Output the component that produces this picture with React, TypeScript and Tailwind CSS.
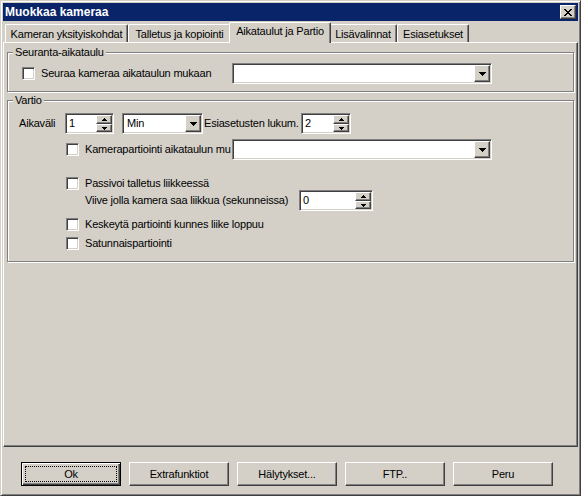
import React from 'react';

const tabs = [
  { label: 'Kameran yksityiskohdat', width: 'w-[123px]', active: false },
  { label: 'Talletus ja kopiointi', width: 'w-[103px]', active: false },
  { label: 'Aikataulut ja Partio', width: 'w-[102px]', active: true },
  { label: 'Lisävalinnat', width: 'w-[68px]', active: false },
  { label: 'Esiasetukset', width: 'w-[72px]', active: false },
];

const raised =
  'bg-[#d4d0c8] border border-t-white border-l-white border-r-[#404040] border-b-[#404040] shadow-[inset_-1px_-1px_0_#808080]';
const sunken =
  'bg-white border border-t-[#808080] border-l-[#808080] border-r-white border-b-white shadow-[inset_1px_1px_0_#404040,inset_-1px_-1px_0_#d4d0c8]';

function DownArrow() {
  return (
    <svg width="7" height="4" shapeRendering="crispEdges">
      <rect x="0" y="0" width="7" height="1" fill="#000" />
      <rect x="1" y="1" width="5" height="1" fill="#000" />
      <rect x="2" y="2" width="3" height="1" fill="#000" />
      <rect x="3" y="3" width="1" height="1" fill="#000" />
    </svg>
  );
}

function SmallArrow({ up }: { up?: boolean }) {
  return (
    <svg width="5" height="3" shapeRendering="crispEdges" className={up ? '' : 'rotate-180'}>
      <rect x="2" y="0" width="1" height="1" fill="#000" />
      <rect x="1" y="1" width="3" height="1" fill="#000" />
      <rect x="0" y="2" width="5" height="1" fill="#000" />
    </svg>
  );
}

function CloseGlyph() {
  const rows = [
    [0, 2, 6, 2],
    [1, 2, 5, 2],
    [2, 4],
    [3, 2],
    [2, 4],
    [1, 2, 5, 2],
    [0, 2, 6, 2],
  ];
  return (
    <svg width="8" height="7" shapeRendering="crispEdges">
      {rows.map((r, y) => (
        <g key={y}>
          <rect x={r[0]} y={y} width={r[1]} height="1" fill="#000" />
          {r.length > 2 && <rect x={r[2]} y={y} width={r[3]} height="1" fill="#000" />}
        </g>
      ))}
    </svg>
  );
}

function Checkbox() {
  return <span className={`w-[13px] h-[13px] shrink-0 ${sunken}`} />;
}

function Combo({ value, width }: { value?: string; width: string }) {
  return (
    <div className={`${width} h-[21px] shrink-0 p-px flex ${sunken}`}>
      <span className="flex-1 pl-[3px] flex items-center">{value}</span>
      <span className={`w-[16px] h-full flex items-center justify-center ${raised}`}>
        <DownArrow />
      </span>
    </div>
  );
}

function Spin({ value, width }: { value: string; width: string }) {
  return (
    <div className={`${width} h-[21px] shrink-0 p-px flex ${sunken}`}>
      <span className="flex-1 pl-[2px] flex items-center">{value}</span>
      <div className="w-[16px] h-full flex flex-col">
        <span className={`h-[9px] flex items-center justify-center ${raised}`}>
          <SmallArrow up />
        </span>
        <span className={`h-[8px] flex items-center justify-center ${raised}`}>
          <SmallArrow />
        </span>
      </div>
    </div>
  );
}

export default function App() {
  return (
    <div
      className="w-[581px] h-[496px] bg-[#d4d0c8] text-black text-[11px] leading-[13px] tracking-[-0.2px] whitespace-nowrap
                 font-['Liberation_Sans',Arial,sans-serif]
                 border border-t-[#d4d0c8] border-l-[#d4d0c8] border-r-[#404040] border-b-[#404040]
                 shadow-[inset_1px_1px_0_#fff,inset_-1px_-1px_0_#808080] p-[2px] flex flex-col"
    >
      {/* Title bar */}
      <div className="h-[18px] bg-[#0a246a] flex items-center justify-between pl-[2px] pr-[2px]">
        <span className="text-white font-bold text-[12px] tracking-normal">Muokkaa kameraa</span>
        <span className={`w-[16px] h-[14px] flex items-center justify-center ${raised}`}>
          <CloseGlyph />
        </span>
      </div>

      {/* Tabs */}
      <div className="h-[21px] flex items-end pl-[2px]">
        {tabs.map((t) =>
          t.active ? (
            <div
              key={t.label}
              className={`${t.width} relative z-10 -mx-[2px] -mb-px h-[21px] pb-[3px] flex items-center justify-center bg-[#d4d0c8]
                          border-l border-t border-r border-l-white border-t-white border-r-[#404040] rounded-t-[2px]
                          shadow-[inset_-1px_0_0_#808080]`}
            >
              {t.label}
            </div>
          ) : (
            <div
              key={t.label}
              className={`${t.width} h-[18px] pt-[1px] flex items-center justify-center bg-[#d4d0c8]
                          border-l border-t border-r border-l-white border-t-white border-r-[#404040] rounded-t-[2px]
                          shadow-[inset_-1px_0_0_#808080]`}
            >
              {t.label}
            </div>
          )
        )}
      </div>

      {/* Panel */}
      <div className={`h-[405px] px-[3px] ${raised}`}>
        {/* Seuranta-aikataulu */}
        <fieldset className="mt-[3px] pb-[7px] border border-[#808080] shadow-[inset_1px_1px_0_#fff,1px_1px_0_#fff]">
          <legend className="ml-[5px] px-[2px] bg-[#d4d0c8]">Seuranta-aikataulu</legend>
          <div className="mt-[4px] pl-[14px] flex items-center">
            <div className="w-[210px] shrink-0 flex items-center gap-[6px]">
              <Checkbox />
              <span>Seuraa kameraa aikataulun mukaan</span>
            </div>
            <Combo width="w-[260px]" />
          </div>
        </fieldset>

        {/* Vartio */}
        <fieldset className="mt-[2px] pb-[11px] border border-[#808080] shadow-[inset_1px_1px_0_#fff,1px_1px_0_#fff]">
          <legend className="ml-[5px] px-[2px] bg-[#d4d0c8]">Vartio</legend>

          <div className="mt-[6px] pl-[11px] flex items-center">
            <span className="w-[46px] shrink-0">Aikaväli</span>
            <Spin value="1" width="w-[49px]" />
            <div className="ml-[8px]">
              <Combo value="Min" width="w-[81px]" />
            </div>
            <span className="w-[98px] shrink-0 pl-[1px]">Esiasetusten lukum.</span>
            <Spin value="2" width="w-[50px]" />
          </div>

          <div className="mt-[5px] pl-[58px] flex items-center">
            <div className="w-[166px] shrink-0 overflow-hidden flex items-center gap-[6px]">
              <Checkbox />
              <span>Kamerapartiointi aikataulun mu</span>
            </div>
            <Combo width="w-[260px]" />
          </div>

          <div className="mt-[17px] pl-[58px] flex items-center gap-[6px]">
            <Checkbox />
            <span>Passivoi talletus liikkeessä</span>
          </div>

          <div className="pl-[77px] flex items-center">
            <span className="w-[214px] shrink-0">Viive jolla kamera saa liikkua (sekunneissa)</span>
            <Spin value="0" width="w-[74px]" />
          </div>

          <div className="mt-[7px] pl-[58px] flex items-center gap-[6px]">
            <Checkbox />
            <span>Keskeytä partiointi kunnes liike loppuu</span>
          </div>

          <div className="mt-[6px] pl-[58px] flex items-center gap-[6px]">
            <Checkbox />
            <span>Satunnaispartiointi</span>
          </div>
        </fieldset>
      </div>

      {/* Buttons */}
      <div className="mt-[15px] pl-[18px] flex gap-[8px]">
        <button
          className="w-[100px] h-[24px] p-[3px] bg-[#d4d0c8] border border-black
                     shadow-[inset_1px_1px_0_#fff,inset_-1px_-1px_0_#404040,inset_-2px_-2px_0_#808080]"
        >
          <span className="w-full h-full flex items-center justify-center border border-dotted border-black">Ok</span>
        </button>
        {['Extrafunktiot', 'Hälytykset...', 'FTP..', 'Peru'].map((b) => (
          <button key={b} className={`w-[100px] h-[24px] flex items-center justify-center ${raised}`}>
            {b}
          </button>
        ))}
      </div>
    </div>
  );
}
